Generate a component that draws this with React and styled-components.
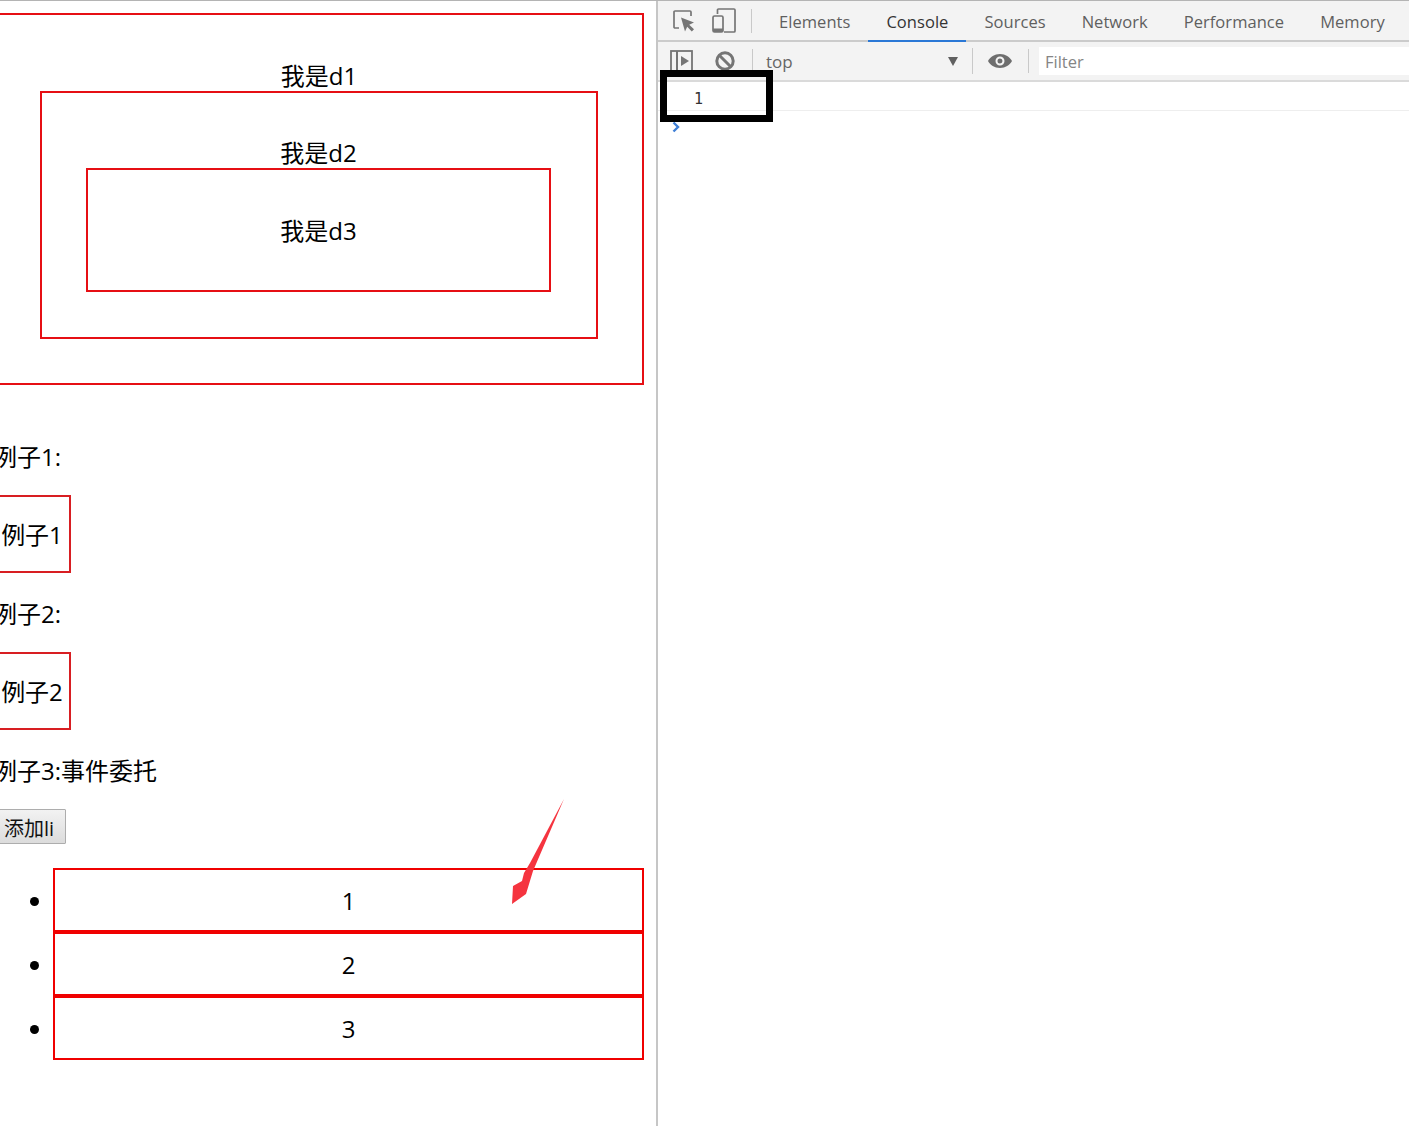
import React from 'react';
import styled, { createGlobalStyle } from 'styled-components';

const GlobalStyle = createGlobalStyle`
  html, body {
    margin: 0;
    padding: 0;
    background: #fff;
    overflow: hidden;
  }
`;

const Screen = styled.div`
  position: relative;
  display: flex;
  width: 1409px;
  height: 1126px;
  box-sizing: border-box;
  border-top: 1px solid #b4b4b4;
  overflow: hidden;
`;

const PagePane = styled.div`
  width: 656px;
  height: 100%;
  flex: none;
  overflow: hidden;
  box-sizing: content-box;
  border-right: 2px solid #c6c6c6;
  font: 24px/30px "Open Sans", "Noto Sans CJK SC", sans-serif;
  color: #000;
`;

const PageBody = styled.div`
  width: 651px;
  margin: 12px 0 0 -7px;
`;

const NestedBox = styled.div`
  box-sizing: border-box;
  border: 2px solid #e60f14;
  padding: ${(p) => p.$pad};
  line-height: 31px;
  text-align: center;
`;

const Label = styled.p`
  margin: ${(p) => p.$top}px 0 24px;
  line-height: 28px;
`;

const SquareBox = styled.div`
  box-sizing: border-box;
  width: 78px;
  height: 78px;
  border: 2px solid #d81e22;
  line-height: 76px;
  text-align: center;
  white-space: nowrap;
`;

const AddButton = styled.button`
  display: block;
  box-sizing: border-box;
  width: 73px;
  height: 35px;
  margin: 0;
  padding: 4px 11px 0 0;
  border: 1px solid #adadad;
  border-radius: 1px;
  background: linear-gradient(#f2f2f2, #dcdcdc);
  font: 20px/30px "Open Sans", "Noto Sans CJK SC", sans-serif;
  color: #111;
  text-align: right;
`;

const List = styled.ul`
  margin: 24px 0 0;
  padding: 0 0 0 60px;
  list-style: none;
`;

const ListItem = styled.li`
  position: relative;
  box-sizing: border-box;
  height: 64px;
  border: 2px solid #f00000;
  line-height: 61px;
  text-align: center;

  &::before {
    content: "";
    position: absolute;
    left: -25px;
    top: 27px;
    width: 9px;
    height: 9px;
    border-radius: 50%;
    background: #000;
  }
`;

const DevTools = styled.div`
  flex: 1;
  min-width: 0;
  display: flex;
  flex-direction: column;
  font-family: "Open Sans", "Liberation Sans", sans-serif;
  color: #5a5a5a;
`;

const TabBar = styled.div`
  display: flex;
  align-items: stretch;
  height: 41px;
  box-sizing: border-box;
  background: #f3f3f3;
  border-bottom: 2px solid #cbcbcb;
`;

const IconSlot = styled.div`
  display: flex;
  align-items: center;
  flex: none;
  width: ${(p) => p.$width}px;
  padding-left: ${(p) => p.$left}px;
  box-sizing: border-box;
`;

const Divider = styled.div`
  flex: none;
  width: 1px;
  height: ${(p) => p.$height || 24}px;
  margin: 0 ${(p) => p.$right || 0}px 0 ${(p) => p.$left || 0}px;
  align-self: center;
  background: #c9c9c9;
`;

const Tabs = styled.div`
  display: flex;
  margin-left: 9px;
`;

const Tab = styled.div`
  padding: 0 18px;
  margin-bottom: -2px;
  line-height: 41px;
  font-size: 16.5px;
  letter-spacing: 0.05px;
  white-space: nowrap;
  color: ${(p) => (p.$active ? '#333' : '#5f5f5f')};
  border-bottom: ${(p) => (p.$active ? '2px solid #2a78d6' : '2px solid transparent')};
  height: 41px;
  box-sizing: border-box;
`;

const FilterBar = styled.div`
  display: flex;
  align-items: center;
  height: 40px;
  box-sizing: border-box;
  background: #f3f3f3;
  border-bottom: 2px solid #dadada;
`;

const ContextSelect = styled.div`
  flex: none;
  width: 219px;
  padding: 0 14px 0 13px;
  box-sizing: border-box;
  display: flex;
  align-items: center;
  justify-content: space-between;
  font-size: 17px;
  color: #666;
`;

const Caret = styled.span`
  width: 0;
  height: 0;
  border-left: 5px solid transparent;
  border-right: 5px solid transparent;
  border-top: 9px solid #606060;
`;

const FilterInput = styled.div`
  flex: 1;
  height: 28px;
  margin-left: 10px;
  padding-left: 6px;
  background: #fff;
  font-size: 16.5px;
  line-height: 30px;
  color: #858585;
`;

const LogRow = styled.div`
  height: 29px;
  box-sizing: border-box;
  padding-left: 36px;
  border-bottom: 1px solid #eeeeee;
  font: 15px/34px "DejaVu Sans Mono", "Liberation Mono", monospace;
  color: #333;
`;

const Prompt = styled.div`
  padding: 10px 0 0 14px;
  line-height: 0;
`;

const Highlight = styled.div`
  position: absolute;
  left: 660px;
  top: 69px;
  width: 113px;
  height: 52px;
  box-sizing: border-box;
  border: 7px solid #000;
  pointer-events: none;
`;

const ArrowMark = styled.svg`
  position: absolute;
  left: 505px;
  top: 792px;
`;

const InspectIcon = () => (
  <svg width="22" height="22" viewBox="0 0 22 22" fill="none">
    <path d="M6 18H2a1 1 0 0 1-1-1V2a1 1 0 0 1 1-1h15a1 1 0 0 1 1 1v4" stroke="#757575" strokeWidth="1.700" />
    <path d="M8 7.500l13 5-4.800 2.200 4.800 4.600-2.200 2.200-4.600-4.800-2.200 4.800z" fill="#757575" />
  </svg>
);

const DeviceIcon = () => (
  <svg width="24" height="25" viewBox="0 0 24 25" fill="none">
    <path d="M5.500 6V2a1 1 0 0 1 1-1H22a1 1 0 0 1 1 1v21a1 1 0 0 1-1 1H12" stroke="#757575" strokeWidth="1.700" />
    <rect x="1" y="8" width="10" height="16" rx="1.500" stroke="#757575" strokeWidth="1.700" />
    <rect x="1" y="20.500" width="10" height="3.500" fill="#757575" />
  </svg>
);

const SidebarIcon = () => (
  <svg width="24" height="22" viewBox="0 0 24 22" fill="none">
    <rect x="1" y="1" width="21" height="20" stroke="#757575" strokeWidth="1.800" />
    <rect x="6" y="1" width="2" height="20" fill="#757575" />
    <path d="M11 6l8 5-8 5z" fill="#757575" />
  </svg>
);

const BlockIcon = () => (
  <svg width="22" height="22" viewBox="0 0 22 22" fill="none">
    <circle cx="11" cy="11" r="8.200" stroke="#757575" strokeWidth="3" />
    <path d="M5 5l12 12" stroke="#757575" strokeWidth="3" />
  </svg>
);

const EyeIcon = () => (
  <svg width="24" height="14" viewBox="0 0 24 14">
    <path
      fillRule="evenodd"
      fill="#6e6e6e"
      d="M12 0C6.500 0 2.200 3 0 7c2.200 4 6.500 7 12 7s9.800-3 12-7c-2.200-4-6.500-7-12-7zm0 2.500a4.500 4.500 0 1 1 0 9 4.500 4.500 0 0 1 0-9zm0 2a2.500 2.500 0 1 0 0 5 2.500 2.500 0 0 0 0-5z"
    />
  </svg>
);

const tabs = ['Elements', 'Console', 'Sources', 'Network', 'Performance', 'Memory'];

const App = () => {
  return (
    <>
      <GlobalStyle />
      <Screen>
        <PagePane>
          <PageBody>
            <NestedBox $pad="45px 44px 44px 45px">
              我是d1
              <NestedBox $pad="44px 45px 45px 44px">
                我是d2
                <NestedBox $pad="45px 45px 44px">我是d3</NestedBox>
              </NestedBox>
            </NestedBox>

            <Label $top={58}>例子1:</Label>
            <SquareBox>例子1</SquareBox>
            <Label $top={27}>例子2:</Label>
            <SquareBox>例子2</SquareBox>
            <Label $top={27}>例子3:事件委托</Label>
            <AddButton>添加li</AddButton>

            <List>
              <ListItem>1</ListItem>
              <ListItem>2</ListItem>
              <ListItem>3</ListItem>
            </List>
          </PageBody>
        </PagePane>

        <DevTools>
          <TabBar>
            <IconSlot $width={54} $left={15}><InspectIcon /></IconSlot>
            <IconSlot $width={39} $left={0}><DeviceIcon /></IconSlot>
            <Divider />
            <Tabs>
              {tabs.map((t) => (
                <Tab key={t} $active={t === 'Console'}>{t}</Tab>
              ))}
            </Tabs>
          </TabBar>

          <FilterBar>
            <IconSlot $width={56} $left={12}><SidebarIcon /></IconSlot>
            <IconSlot $width={38} $left={0}><BlockIcon /></IconSlot>
            <Divider />
            <ContextSelect>
              top
              <Caret />
            </ContextSelect>
            <Divider $height={26} $right={15} />
            <EyeIcon />
            <Divider $height={24} $left={16} />
            <FilterInput>Filter</FilterInput>
          </FilterBar>

          <LogRow>1</LogRow>
          <Prompt>
            <svg width="9" height="12" viewBox="0 0 9 12" fill="none">
              <path d="M1.500 1.500L6 6l-4.500 4.500" stroke="#3f7fd6" strokeWidth="2.400" />
            </svg>
          </Prompt>
        </DevTools>

        <Highlight />
        <ArrowMark width="64" height="115" viewBox="505 792 64 115">
          <path d="M564 798L530 862L524 872L522 880L513 885L512 903L526 893L533 870Z" fill="#f5343f" />
        </ArrowMark>
      </Screen>
    </>
  );
};

export default App;
